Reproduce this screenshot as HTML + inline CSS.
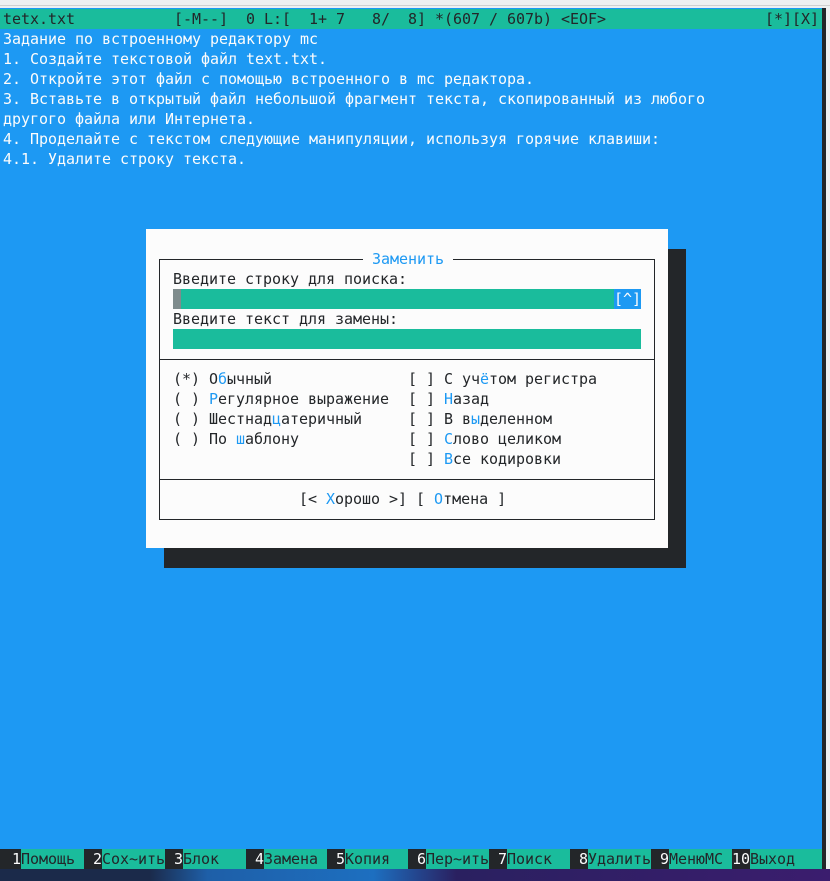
<!DOCTYPE html>
<html><head><meta charset="utf-8"><style>
html,body{margin:0;padding:0;}
body{width:830px;height:881px;position:relative;overflow:hidden;background:#eff0f1;font-family:"DejaVu Sans Mono","Liberation Mono",monospace;font-size:15px;}
.t{position:absolute;white-space:pre;line-height:20px;height:20px;letter-spacing:-0.03px;}
#term{position:absolute;left:0;top:8px;width:822px;height:862px;background:#1d99f3;}
.w{color:#fcfcfc;}
.d{color:#232629;}
.b{color:#1d99f3;}
.box{position:absolute;}
</style></head><body>
<div class="box" style="left:0;top:5px;width:830px;height:1px;background:#d0d0d0"></div>
<div id="term"></div>
<div class="box" style="left:822px;top:8px;width:4px;height:862px;background:#232629"></div>
<div class="box" style="left:0;top:869px;width:830px;height:12px;background:linear-gradient(90deg,#1b2a4a 0%,#1b2a4a 18%,#1e5fa8 25%,#1d6fc0 45%,#2a2060 55%,#3b1d6e 100%)"></div>
<div class="box" style="left:0;top:9px;width:822px;height:20px;background:#1abc9c"></div>
<div class="t d" style="left:3px;top:9px">tetx.txt           [-M--]  0 L:[  1+ 7   8/  8] *(607 / 607b) &lt;EOF&gt;</div>
<div class="t d" style="left:765px;top:9px">[*][X]</div>
<div class="t w" style="left:3px;top:29px">Задание по встроенному редактору mc</div>
<div class="t w" style="left:3px;top:49px">1. Создайте текстовой файл text.txt.</div>
<div class="t w" style="left:3px;top:69px">2. Откройте этот файл с помощью встроенного в mc редактора.</div>
<div class="t w" style="left:3px;top:89px">3. Вставьте в открытый файл небольшой фрагмент текста, скопированный из любого</div>
<div class="t w" style="left:3px;top:109px">другого файла или Интернета.</div>
<div class="t w" style="left:3px;top:129px">4. Проделайте с текстом следующие манипуляции, используя горячие клавиши:</div>
<div class="t w" style="left:3px;top:149px">4.1. Удалите строку текста.</div>

<div class="box" style="left:164px;top:249px;width:522px;height:319px;background:#232629"></div>
<div class="box" style="left:146px;top:229px;width:522px;height:319px;background:#fcfcfc"></div>
<div class="box" style="left:159px;top:259px;width:494px;height:259px;border:1px solid #232629"></div>
<div class="box" style="left:159px;top:359px;width:496px;height:1px;background:#232629"></div>
<div class="box" style="left:159px;top:479px;width:496px;height:1px;background:#232629"></div>
<div class="t b" style="left:363px;top:249px;background:#fcfcfc"> Заменить </div>
<div class="t d" style="left:173px;top:269px">Введите строку для поиска:</div>
<div class="box" style="left:173px;top:289px;width:441px;height:20px;background:#1abc9c"></div>
<div class="box" style="left:173px;top:289px;width:8px;height:20px;background:#7f8c8d"></div>
<div class="t w" style="left:614px;top:289px;width:27px;background:#1d99f3">[^]</div>
<div class="t d" style="left:173px;top:309px">Введите текст для замены:</div>
<div class="box" style="left:173px;top:329px;width:468px;height:20px;background:#1abc9c"></div>

<div class="t d" style="left:173px;top:369px">(*) <span class="d">О</span><span class="b">б</span>ычный</div>
<div class="t d" style="left:173px;top:389px">( ) <span class="b">Р</span>егулярное выражение</div>
<div class="t d" style="left:173px;top:409px">( ) Шестнад<span class="b">ц</span>атеричный</div>
<div class="t d" style="left:173px;top:429px">( ) По <span class="b">ш</span>аблону</div>
<div class="t d" style="left:408px;top:369px">[ ] С уч<span class="b">ё</span>том регистра</div>
<div class="t d" style="left:408px;top:389px">[ ] <span class="b">Н</span>азад</div>
<div class="t d" style="left:408px;top:409px">[ ] В в<span class="b">ы</span>деленном</div>
<div class="t d" style="left:408px;top:429px">[ ] <span class="b">С</span>лово целиком</div>
<div class="t d" style="left:408px;top:449px">[ ] <span class="b">В</span>се кодировки</div>
<div class="t d" style="left:299px;top:489px">[&lt; <span class="b">Х</span>орошо &gt;] [ <span class="b">О</span>тмена ]</div>

<div class="box" style="left:0;top:849px;width:822px;height:20px;background:#232629"></div>
<div class="t w" style="left:12px;top:849px">1</div><div class="t d" style="left:21px;top:849px;width:63px;background:#1abc9c">Помощь</div>
<div class="t w" style="left:93px;top:849px">2</div><div class="t d" style="left:102px;top:849px;width:63px;background:#1abc9c">Сох~ить</div>
<div class="t w" style="left:174px;top:849px">3</div><div class="t d" style="left:183px;top:849px;width:63px;background:#1abc9c">Блок</div>
<div class="t w" style="left:255px;top:849px">4</div><div class="t d" style="left:264px;top:849px;width:63px;background:#1abc9c">Замена</div>
<div class="t w" style="left:336px;top:849px">5</div><div class="t d" style="left:345px;top:849px;width:63px;background:#1abc9c">Копия</div>
<div class="t w" style="left:417px;top:849px">6</div><div class="t d" style="left:426px;top:849px;width:63px;background:#1abc9c">Пер~ить</div>
<div class="t w" style="left:498px;top:849px">7</div><div class="t d" style="left:507px;top:849px;width:63px;background:#1abc9c">Поиск</div>
<div class="t w" style="left:579px;top:849px">8</div><div class="t d" style="left:588px;top:849px;width:63px;background:#1abc9c">Удалить</div>
<div class="t w" style="left:660px;top:849px">9</div><div class="t d" style="left:669px;top:849px;width:63px;background:#1abc9c">МенюMC</div>
<div class="t w" style="left:732px;top:849px">10</div><div class="t d" style="left:750px;top:849px;width:72px;background:#1abc9c">Выход</div>
</body></html>
